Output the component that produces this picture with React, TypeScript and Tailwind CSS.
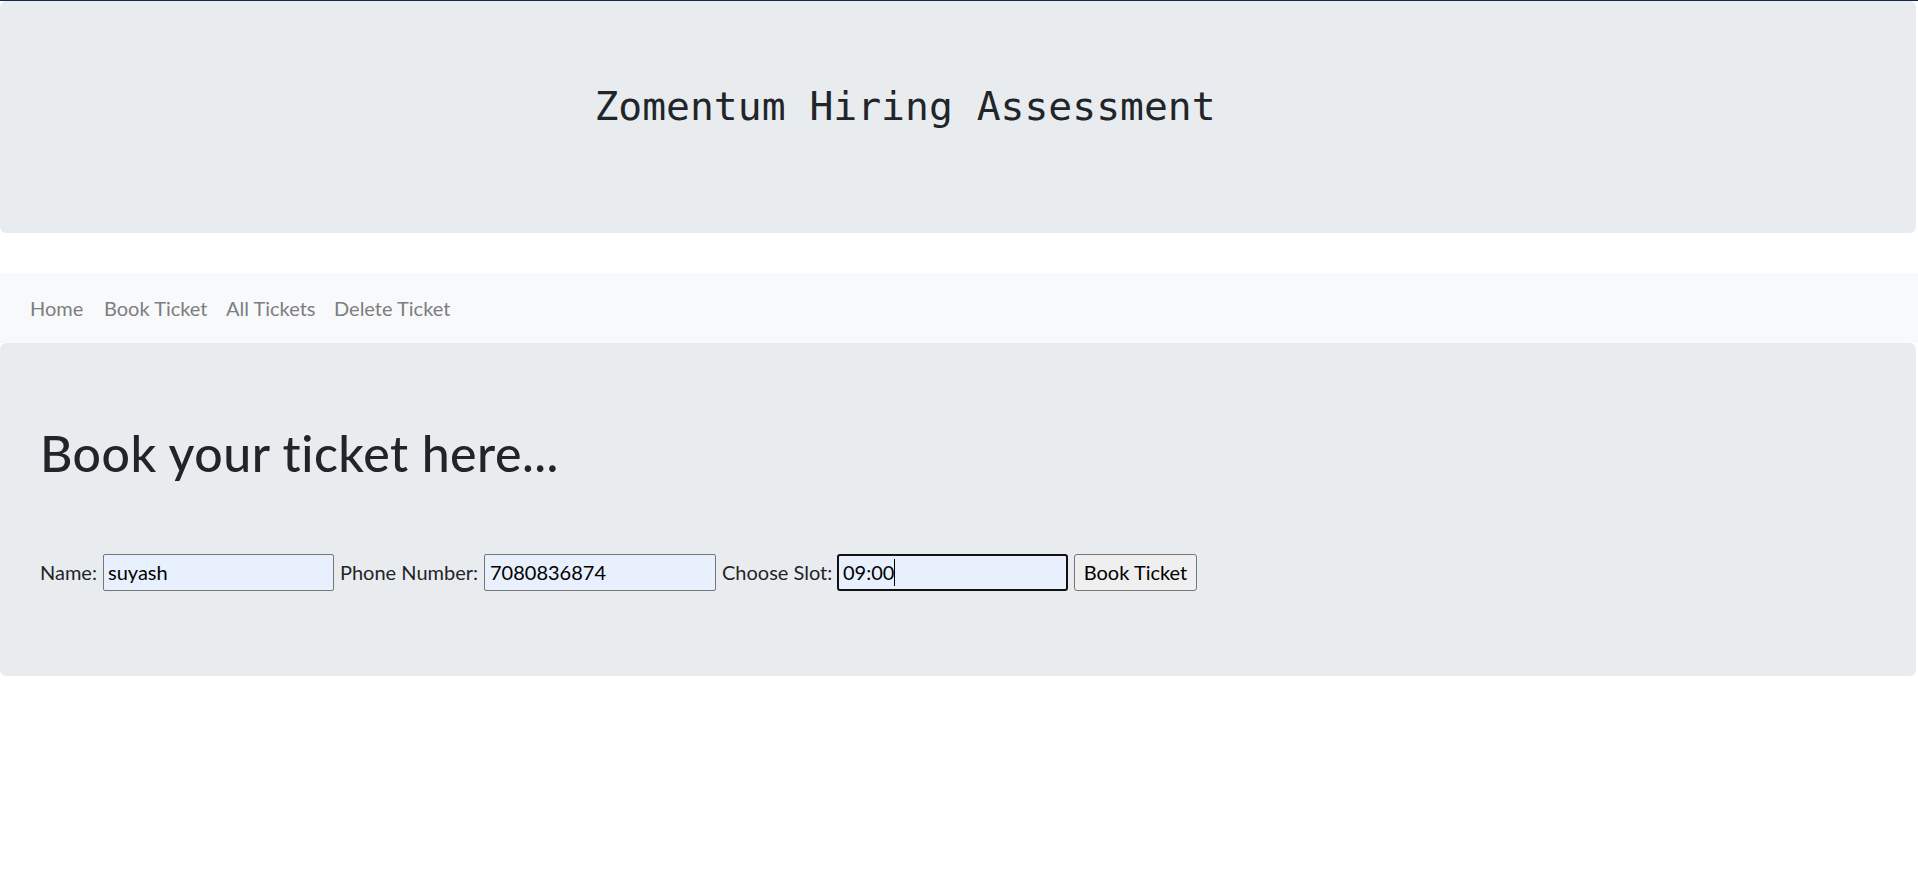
import React from "react";

const body = "font-['Lato','Noto_Sans',sans-serif] [font-variant-ligatures:none]";

const NavLink = ({ label, width }: { label: string; width: string }) => (
  <a href="#" className={`${width} pl-[10px] leading-[30px] text-[20px] text-[#7d7e7f] no-underline`}>
    {label}
  </a>
);

const App = (): React.JSX.Element => {
  return (
    <div className={`min-h-[896px] bg-white border-t border-[#13294b] ${body}`}>
      {/* Titre */}
      <div className="mr-[2px] h-[232px] rounded-[6px] bg-[#e9ecef] pt-[81px]">
        <h1 className="pr-[106px] text-center font-['DejaVu_Sans_Mono',monospace] text-[39.7px] leading-[48px] font-normal text-[#212529]">
          Zomentum Hiring Assessment
        </h1>
      </div>

      {/* Navigation */}
      <nav className="mt-[40px] flex h-[70px] items-center bg-[#f8f9fa] pl-[20px]">
        <NavLink label="Home" width="w-[74px]" />
        <NavLink label="Book Ticket" width="w-[122px]" />
        <NavLink label="All Tickets" width="w-[108px]" />
        <NavLink label="Delete Ticket" width="w-[140px]" />
      </nav>

      {/* Formulaire */}
      <div className="mr-[2px] rounded-[6px] bg-[#e9ecef] px-[40px] pt-[80px] pb-[85px] text-[#212529]">
        <h1 className="h-[60px] text-[50px] leading-[60px] font-medium tracking-[0.5px]">Book your ticket here...</h1>
        <form className="mt-[70px] flex h-[38px] items-center text-[20px]">
          <label className="w-[63px]">Name:</label>
          <input
            defaultValue="suyash"
            className="h-[37px] w-[231px] rounded-[2px] border border-[#767676] bg-[#e8f0fe] px-[4px] text-[20px] text-black outline-none"
          />
          <label className="ml-[6px] w-[144px]">Phone Number:</label>
          <input
            defaultValue="7080836874"
            className="h-[37px] w-[232px] rounded-[2px] border border-[#767676] bg-[#e8f0fe] px-[5px] text-[20px] text-black outline-none"
          />
          <label className="ml-[6px] w-[115px]">Choose Slot:</label>
          <div className="flex h-[37px] w-[231px] items-center rounded-[3px] border-2 border-[#111] bg-[#e8f0fe] pl-[4px] text-black">
            <span>09:00</span>
            <span className="h-[27px] w-[1px] bg-black" />
          </div>
          <button
            type="button"
            className="ml-[6px] h-[37px] w-[123px] rounded-[3px] border border-[#767676] bg-[#efefef] text-[20px] text-black"
          >
            Book Ticket
          </button>
        </form>
      </div>
    </div>
  );
};

export default App;
